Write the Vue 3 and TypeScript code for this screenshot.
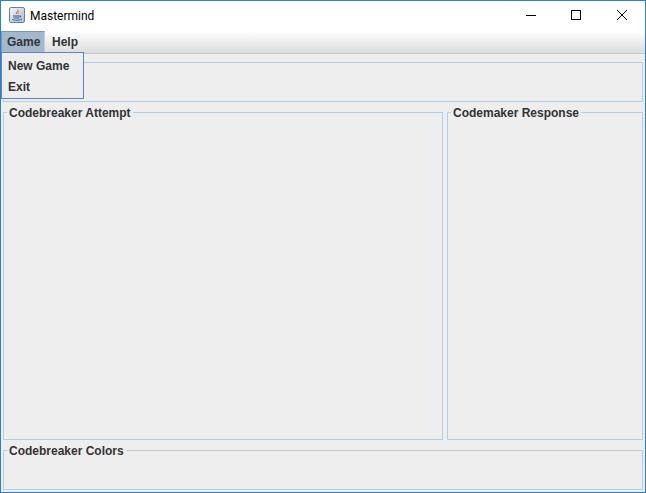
<script setup lang="ts">
const menus: string[] = ['Game', 'Help']
const popupItems: string[] = ['New Game', 'Exit']
</script>

<template>
  <div class="window">
    <header class="titlebar">
      <svg class="app-icon" width="16" height="16" viewBox="0 0 16 16">
        <defs>
          <linearGradient id="ic" x1="0" y1="0" x2="1" y2="1">
            <stop offset="0" stop-color="#f4f7fb" />
            <stop offset="1" stop-color="#a9bdd4" />
          </linearGradient>
        </defs>
        <rect x="0.5" y="0.5" width="15" height="15" rx="1.5" fill="url(#ic)" stroke="#6f7f92" />
        <path d="M8.5 2.5C10 4 6.5 5 7.5 7M10 4C9 5 8.5 5.5 9.3 7" fill="none" stroke="#d9702b" stroke-width="1" />
        <path d="M4 8.5H10.5V9.5H4.5ZM4.5 10.5H10V11.4H5ZM11 8.5C13 8.5 12.5 10.5 10.5 10.5" fill="#4a78a8" stroke="#4a78a8" stroke-width="0.3" />
        <path d="M3 12.5C6 13.6 10 13.6 13 12.2" fill="none" stroke="#3f6c9c" stroke-width="1" />
      </svg>
      <span class="title-text">Mastermind</span>
      <div class="controls">
        <span class="ctl"><svg width="12" height="12" viewBox="0 0 12 12"><path d="M2 5.5H12" stroke="#000" /></svg></span>
        <span class="ctl"><svg width="12" height="12" viewBox="0 0 12 12"><rect x="1.5" y="0.5" width="9" height="9" fill="none" stroke="#000" /></svg></span>
        <span class="ctl"><svg width="12" height="12" viewBox="0 0 12 12"><path d="M1 0L11 10M11 0L1 10" stroke="#000" /></svg></span>
      </div>
    </header>

    <nav class="menubar">
      <span v-for="(m, i) in menus" :key="m" class="menu" :class="{ active: i === 0 }">{{ m }}</span>
      <ul class="popup">
        <li v-for="p in popupItems" :key="p">{{ p }}</li>
      </ul>
    </nav>

    <main class="content">
      <section class="panel top-panel"></section>
      <div class="middle">
        <section class="panel attempt">
          <h2 class="legend">Codebreaker Attempt</h2>
        </section>
        <section class="panel response">
          <h2 class="legend">Codemaker Response</h2>
        </section>
      </div>
      <section class="panel colors">
        <h2 class="legend">Codebreaker Colors</h2>
      </section>
    </main>
  </div>
</template>

<style>
html, body { margin: 0; padding: 0; }
</style>

<style scoped>
.window {
  box-sizing: border-box;
  width: 646px;
  height: 493px;
  display: flex;
  flex-direction: column;
  border: 1px solid #2b7fcb;
  background: #eeeeee;
  font-family: "Liberation Sans", Arial, sans-serif;
  overflow: hidden;
}
.titlebar {
  box-sizing: border-box;
  height: 30px;
  flex: none;
  display: flex;
  align-items: center;
  background: #ffffff;
  padding: 0 0 2px 8px;
}
.title-text {
  margin: 2px 0 0 5px;
  font-family: Roboto, "Noto Sans", sans-serif;
  font-size: 12px;
  color: #000;
}
.controls {
  margin-left: auto;
  display: flex;
  align-self: flex-start;
}
.ctl {
  width: 46px;
  display: flex;
  justify-content: center;
  padding-top: 9px;
}
.menubar {
  position: relative;
  height: 23px;
  flex: none;
  display: flex;
  background: linear-gradient(#ffffff, #dcdcdc);
  border-bottom: 1px solid #c8c8c8;
  box-sizing: border-box;
}
.menu {
  box-sizing: border-box;
  height: 21px;
  line-height: 23px;
  padding: 0 7px;
  font-size: 12px;
  font-weight: 700;
  color: #333;
}
.menu.active {
  background: #a3b8cc;
  border: 1px solid #7f97b0;
  border-bottom: none;
  border-right-color: #c3cfdb;
  padding: 0 5px;
  line-height: 21px;
  width: 44px;
}
.popup {
  position: absolute;
  left: 0;
  top: 21px;
  z-index: 2;
  box-sizing: border-box;
  width: 83px;
  height: 47px;
  margin: 0;
  padding: 3px 0 1px;
  list-style: none;
  background: #eeeeee;
  border: 1px solid #6382bf;
}
.popup li {
  height: 21px;
  line-height: 21px;
  padding-left: 6px;
  font-size: 12px;
  font-weight: 700;
  color: #333;
}
.content {
  flex: 1;
  display: flex;
  flex-direction: column;
  gap: 10px;
  padding: 8px 2px 0;
}
.panel {
  position: relative;
  box-sizing: border-box;
  border: 1px solid #b3cfe8;
}
.top-panel { height: 40px; flex: none; }
.middle {
  height: 328px;
  flex: none;
  display: flex;
  gap: 4px;
}
.attempt { width: 440px; flex: none; }
.response { flex: 1; }
.colors { height: 40px; flex: none; }
.legend {
  position: absolute;
  left: 3px;
  top: -7px;
  margin: 0;
  padding: 0 2px;
  background: #eeeeee;
  font-size: 12px;
  line-height: 14px;
  font-weight: 700;
  color: #333;
  white-space: nowrap;
}
</style>
